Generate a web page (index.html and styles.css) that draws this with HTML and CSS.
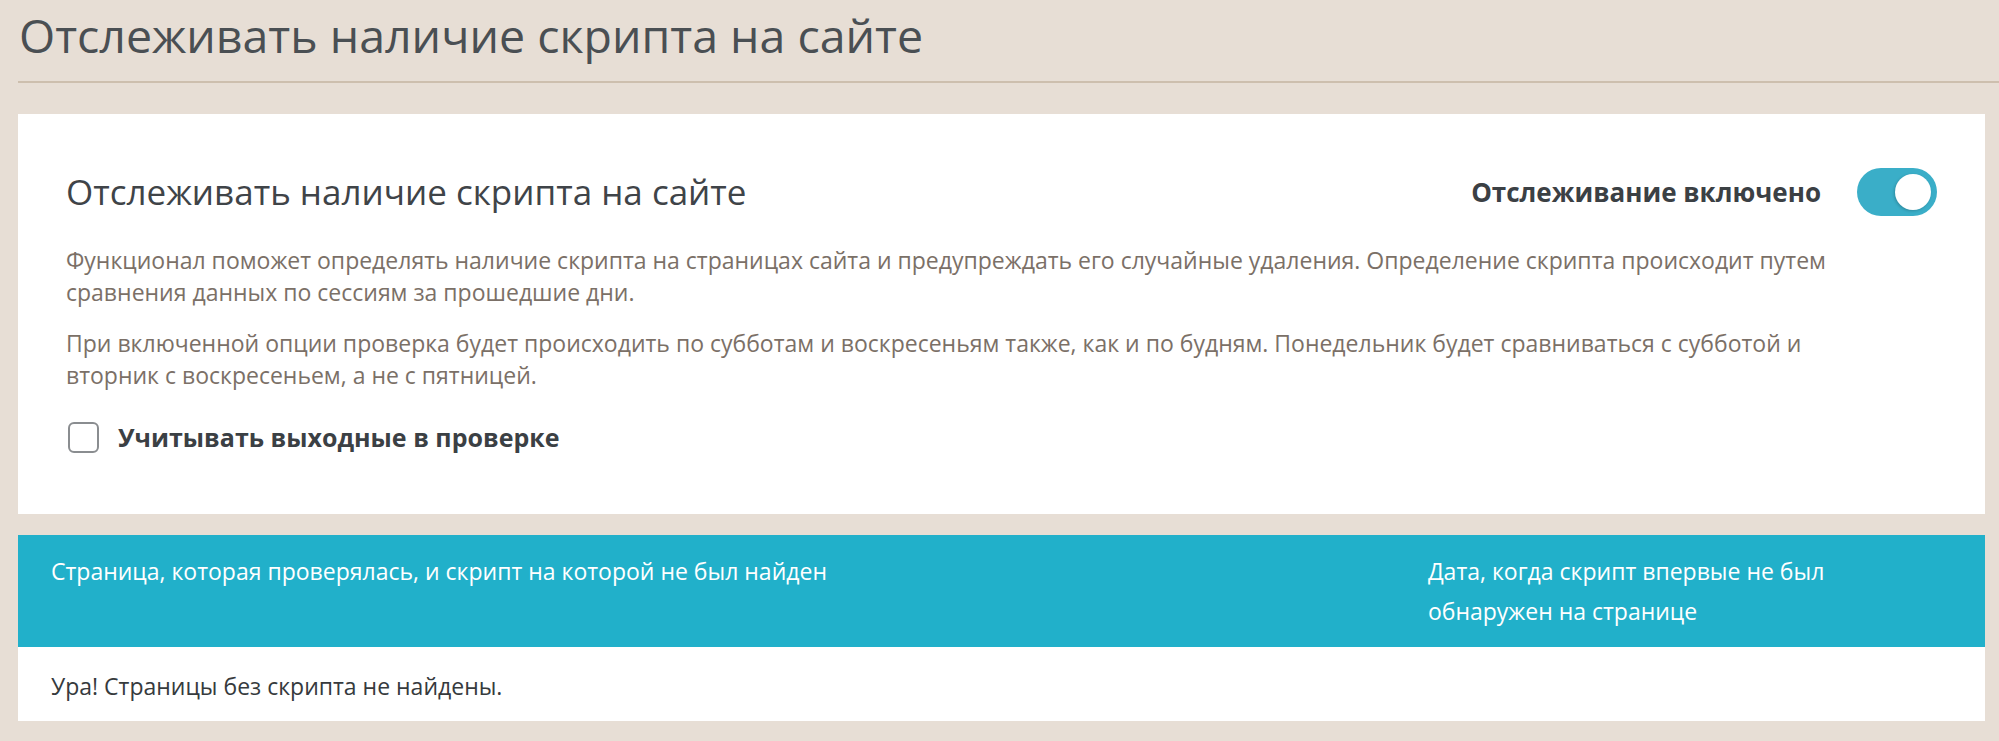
FILE: index.html
```html
<!DOCTYPE html>
<html lang="ru">
<head>
  <meta charset="UTF-8">
  <title>Отслеживать наличие скрипта на сайте</title>
  <link rel="stylesheet" href="styles.css">
</head>
<body>
  <h1 class="zagolovok">Отслеживать наличие скрипта на сайте</h1>

  <div class="kartochka">
    <div class="shapka">
      <h2>Отслеживать наличие скрипта на сайте</h2>
      <div class="status">
        <span>Отслеживание включено</span>
        <span class="tumbler vkl"><span class="knopka"></span></span>
      </div>
    </div>
    <p class="opisanie">Функционал поможет определять наличие скрипта на страницах сайта и предупреждать его случайные удаления. Определение скрипта происходит путем сравнения данных по сессиям за прошедшие дни.</p>
    <p class="opisanie">При включенной опции проверка будет происходить по субботам и воскресеньям также, как и по будням. Понедельник будет сравниваться с субботой и<br>вторник с воскресеньем, а не с пятницей.</p>
    <label class="galochka">
      <span class="kvadrat"></span>
      Учитывать выходные в проверке
    </label>
  </div>

  <div class="tablica">
    <div class="tablica-shapka">
      <div>Страница, которая проверялась, и скрипт на которой не был найден</div>
      <div>Дата, когда скрипт впервые не был обнаружен на странице</div>
    </div>
    <div class="tablica-pusto">Ура! Страницы без скрипта не найдены.</div>
  </div>
</body>
</html>
```

FILE: styles.css
```css
:root {
  --fon: #e7ded5;
  --liniya: #cdbfae;
  --biryuza: #21b0ca;
  --tumbler: #3aaec8;
  --tekst: #43484c;
  --korichnevyj: #7b7067;
}

* {
  box-sizing: border-box;
  margin: 0;
  padding: 0;
}

body {
  background: var(--fon);
  font-family: 'Open Sans', 'Liberation Sans', sans-serif;
  color: var(--tekst);
  padding: 0 14px 0 18px;
}

.zagolovok {
  font-weight: 400;
  font-size: 46.5px;
  line-height: 1;
  color: #4a4f53;
  padding: 12px 0 0 1px;
  height: 83px;
  border-bottom: 2px solid var(--liniya);
  margin-right: -14px;
}

.kartochka {
  background: #fff;
  margin-top: 31px;
  padding: 54px 48px 60px 48px;
}

.shapka {
  display: flex;
  justify-content: space-between;
  align-items: center;
  margin-bottom: 28px;
}

.shapka h2 {
  font-weight: 400;
  font-size: 35px;
  line-height: 48px;
  color: #3f4448;
}

.status {
  display: flex;
  align-items: center;
  gap: 36px;
  font-weight: 700;
  font-size: 26px;
  color: #3b4044;
}

.tumbler {
  width: 80px;
  height: 48px;
  border-radius: 24px;
  background: #ccc;
  padding: 6px;
  display: flex;
}

.tumbler.vkl {
  background: var(--tumbler);
  justify-content: flex-end;
}

.knopka {
  width: 36px;
  height: 36px;
  border-radius: 50%;
  background: #fff;
  box-shadow: -1px 1px 3px rgba(0,0,0,0.2);
}

.opisanie {
  font-size: 23px;
  line-height: 32px;
  color: var(--korichnevyj);
  margin-bottom: 19px;
}

.galochka {
  display: flex;
  align-items: center;
  gap: 19px;
  font-weight: 700;
  font-size: 25px;
  line-height: 34px;
  color: #3b4044;
  margin-top: 29px;
  padding-left: 2px;
}

.kvadrat {
  width: 31px;
  height: 31px;
  border: 2px solid #8a8d90;
  border-radius: 6px;
  background: #fff;
}

.tablica {
  margin-top: 21px;
  background: #fff;
}

.tablica-shapka {
  display: grid;
  grid-template-columns: 70% 30%;
  background: var(--biryuza);
  color: #fff;
  font-size: 23px;
  line-height: 40px;
  height: 112px;
  padding-top: 16px;
}

.tablica-shapka div {
  padding: 0 33px;
}

.tablica-shapka div + div {
  padding-right: 90px;
}

.tablica-pusto {
  font-size: 23px;
  color: #363a3d;
  padding: 0 33px;
  height: 74px;
  line-height: 78px;
}
```
